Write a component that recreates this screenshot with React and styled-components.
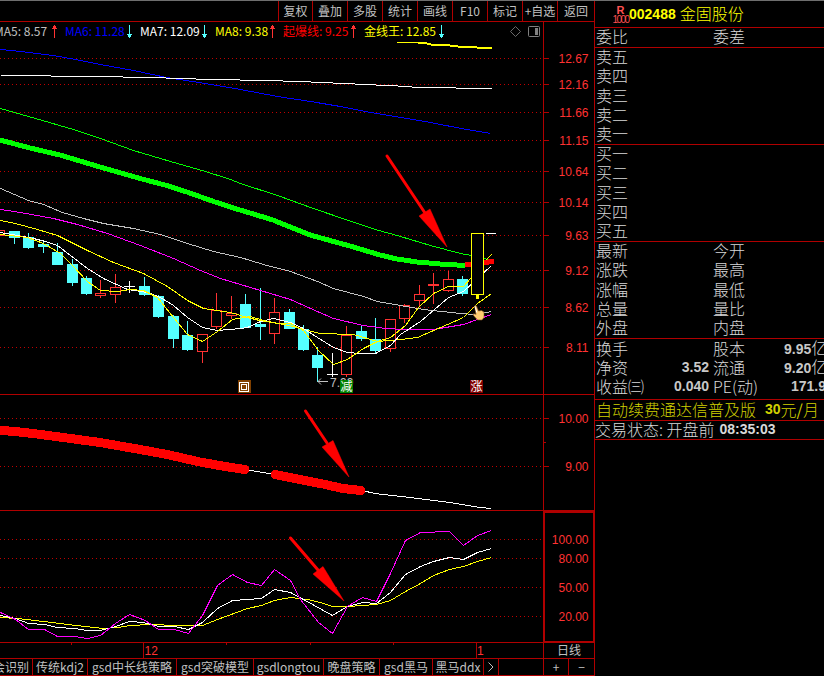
import React from "react";
import styled, { createGlobalStyle } from "styled-components";

const LINE = "#b00000";
const RED = "#ff3232";
const CYAN = "#54ffff";
const GREY = "#c0c0c0";

const tools = [
  { label: "复权", width: 34 },
  { label: "叠加", width: 35 },
  { label: "多股", width: 35 },
  { label: "统计", width: 35 },
  { label: "画线", width: 35 },
  { label: "F10", width: 35 },
  { label: "标记", width: 35 },
  { label: "+自选", width: 35 },
  { label: "返回", width: 37 },
];

const averages = [
  { label: "MA5: 8.57", color: GREY, width: 71, up: true },
  { label: "MA6: 11.28", color: "#0000ff", width: 75, up: false },
  { label: "MA7: 12.09", color: "#ffffff", width: 75, up: false },
  { label: "MA8: 9.38", color: "#ffff00", width: 68, up: true },
  { label: "起爆线: 9.25", color: "#ff0000", width: 81, up: true },
  { label: "金线王: 12.85", color: "#ffff00", width: 88, up: false },
];

const priceGrid = [
  [58, "12.67"],
  [84, "12.16"],
  [112, "11.66"],
  [140, "11.15"],
  [171, "10.64"],
  [202, "10.14"],
  [235, "9.63"],
  [270, "9.12"],
  [307, "8.62"],
  [347, "8.11"],
];

const trendGrid = [
  [418, "10.00"],
  [466, "9.00"],
];

const kdjGrid = [
  [539, "100.00"],
  [558, "80.00"],
  [587, "50.00"],
  [616, "20.00"],
];

// [left, body top, body bottom, wick top, wick bottom, kind]
const candles = [
  [-6, 230, 236, 230, 236, "up"],
  [9, 231, 238, 231, 244, "down"],
  [23, 237, 248, 233, 249, "down"],
  [38, 244, 247, 241, 253, "down"],
  [52, 252, 265, 243, 265, "down"],
  [67, 264, 283, 259, 286, "down"],
  [81, 278, 294, 276, 295, "down"],
  [95, 293, 296, 280, 298, "up"],
  [110, 287, 295, 274, 303, "up"],
  [124, 286, 287, 281, 293, "flat"],
  [139, 286, 295, 277, 296, "down"],
  [153, 296, 317, 295, 318, "down"],
  [168, 316, 339, 315, 348, "down"],
  [182, 335, 350, 321, 351, "down"],
  [197, 334, 352, 334, 363, "up"],
  [211, 310, 327, 293, 329, "up"],
  [226, 313, 316, 296, 319, "up"],
  [240, 304, 328, 294, 328, "down"],
  [255, 324, 327, 288, 340, "down"],
  [269, 312, 334, 298, 344, "up"],
  [284, 312, 329, 309, 329, "down"],
  [298, 329, 350, 325, 351, "down"],
  [312, 355, 368, 347, 382, "down"],
  [327, 374, 375, 353, 377, "flat"],
  [341, 335, 375, 326, 377, "up"],
  [356, 331, 339, 325, 341, "down"],
  [370, 339, 351, 318, 353, "down"],
  [385, 319, 349, 319, 352, "up"],
  [399, 305, 319, 304, 323, "up"],
  [414, 294, 301, 285, 307, "up"],
  [428, 284, 286, 273, 304, "up"],
  [443, 279, 291, 271, 292, "up"],
  [457, 279, 294, 276, 296, "down"],
];

const priceLines = [
  { color: "#0000ff", points: "0,49 20,51 53,55 75,59 100,64 133,70 166,77 205,83 240,89 277,96 310,101 340,106 370,112 400,117 430,122 466,129 490,133" },
  { color: "#ffffff", points: "0,75 50,75 51,76 122,76 123,77 165,77 166,78 195,78 196,79 239,79 240,80 268,80 296,81 325,82 340,83 368,84 383,85 411,86 412,87 455,87 456,88 491,88" },
  { color: "#00ff00", points: "0,108 35,118 73,129 100,138 133,150 170,161 205,171 230,179 240,183 280,196 310,207 348,220 375,229 400,236 430,245 460,253 471,255 488,259" },
  { color: "#c0c0c0", points: "0,188 28,200 43,204 62,212 83,218 103,223 133,228 160,234 187,243 213,251 240,257 263,264 290,271 317,281 333,288 363,296 377,301 400,305 423,309 460,313 475,314 491,311" },
  { color: "#ff00ff", points: "0,209 20,212 53,218 77,224 107,233 140,245 173,258 200,270 220,278 240,284 260,290 290,299 310,308 333,318 363,325 385,328 403,329 433,329 463,324 491,314" },
  { color: "#ffff00", points: "0,220 15,223 37,229 57,235 87,250 113,262 143,273 167,286 187,300 203,308 230,312 247,317 263,321 273,322 293,326 303,329 320,333 353,334 377,341 400,339 417,337 447,324 463,317 477,303 491,293" },
  { color: "#ffffff", points: "0,232 17,235 33,238 45,241 57,245 70,255 87,268 103,278 127,289 147,292 160,297 173,305 187,317 202,327 217,330 240,328 247,327 260,321 273,318 290,322 303,328 317,337 333,347 347,352 360,353 375,353 390,345 400,334 420,321 448,297 463,291 475,280 491,265" },
  { color: "#ffff00", points: "0,234 27,237 43,243 60,253 72,265 87,281 100,290 117,291 130,289 143,290 157,297 173,317 187,334 202,341 217,331 232,319 250,316 263,320 277,323 290,323 303,330 318,350 333,364 347,359 363,348 377,341 390,337 405,325 418,307 433,293 448,286 463,286 471,277 485,260 491,254" },
];

const kdjLines = [
  { color: "#ffff00", points: "0,617 17,618 43,621 67,624 103,628 117,627 130,625 150,624 177,625 202,625 217,619 247,608 261,605 274,600 290,597 307,599 320,602 332,606 347,606 376,604 390,600 405,591 420,583 433,575 449,569 463,566 477,561 491,557" },
  { color: "#ffffff", points: "0,615 15,618 28,623 44,624 57,627 74,628 87,630 100,630 115,626 129,621 143,622 158,626 174,626 188,629 202,622 217,608 232,600 261,598 274,589 290,592 303,599 332,615 347,606 362,602 376,603 390,592 405,574 420,566 433,561 449,557 463,559 477,552 491,548" },
  { color: "#ff00ff", points: "0,612 15,619 28,629 44,629 57,636 74,636 87,638 100,635 115,623 129,614 145,620 158,629 174,629 188,633 202,615 217,585 232,574 247,582 261,585 274,569 290,580 300,599 318,622 332,633 347,606 362,597 376,601 390,573 405,540 420,532 449,531 463,545 477,535 491,530" },
];

const tabs = [
  { label: "会识别", width: 33, clipped: true },
  { label: "传统kdj2", width: 55 },
  { label: "gsd中长线策略", width: 89 },
  { label: "gsd突破模型", width: 77 },
  { label: "gsdlongtou", width: 70 },
  { label: "晚盘策略", width: 56 },
  { label: "gsd黑马", width: 53 },
  { label: "黑马ddx", width: 51 },
];

const sells = ["卖五", "卖四", "卖三", "卖二", "卖一"];
const buys = ["买一", "买二", "买三", "买四", "买五"];
const quotes = [
  ["最新", "今开"],
  ["涨跌", "最高"],
  ["涨幅", "最低"],
  ["总量", "量比"],
  ["外盘", "内盘"],
];

const GlobalStyle = createGlobalStyle`
  * {
    box-sizing: border-box;
  }

  body {
    margin: 0;
    background: #000;
    overflow: hidden;
  }
`;

const Screen = styled.div`
  display: grid;
  grid-template-columns: 594px 230px;
  width: 824px;
  height: 676px;
  overflow: hidden;
  border-top: 1px solid #6e6e6e;
  background: #000;
  color: ${GREY};
  font: 12px/15px "Noto Sans CJK SC", "Liberation Sans", sans-serif;
  white-space: nowrap;
`;

const Main = styled.main`
  display: flex;
  flex-direction: column;
  min-width: 0;
`;

const Toolbar = styled.nav`
  display: flex;
  justify-content: flex-end;
  height: 21px;
  border-bottom: 1px solid ${LINE};
`;

const Tool = styled.div`
  display: flex;
  align-items: center;
  justify-content: center;
  width: ${({ $width }) => $width}px;
  padding-bottom: 2px;
  border-left: 1px solid ${LINE};
`;

const Legend = styled.div`
  display: flex;
  align-items: center;
  width: 544px;
  height: 19px;
  padding-right: 3px;
  border-right: 1px solid ${LINE};
  overflow: hidden;
`;

const Average = styled.div`
  display: flex;
  flex: none;
  align-items: center;
  justify-content: space-between;
  width: ${({ $width }) => $width}px;
  padding-right: 8px;
  color: ${({ $color }) => $color};

  span {
    padding-bottom: 2px;
  }

  &:first-child {
    margin-left: -6px;
  }
`;

const LegendTools = styled.div`
  display: flex;
  gap: 7px;
  margin-left: auto;
`;

const Pane = styled.svg`
  display: block;
  flex: none;
  width: 594px;
  height: ${({ $height }) => $height}px;
  border-bottom: 1px solid ${LINE};
  font: 12px "Liberation Sans", "Noto Sans CJK SC", sans-serif;
`;

const BottomRow = styled.div`
  display: flex;
  flex: none;
  height: ${({ $height }) => $height}px;
  border-bottom: 1px solid ${LINE};
`;

const Cell = styled.div`
  display: flex;
  align-items: center;
  justify-content: ${({ $clipped }) => ($clipped ? "flex-end" : "center")};
  width: ${({ $width }) => $width}px;
  padding: ${({ $clipped, $flush }) => `0 ${$clipped ? 3 : 0}px ${$flush ? 0 : 2}px 0`};
  border-right: ${({ $open }) => ($open ? "0" : `1px solid ${LINE}`)};
  overflow: hidden;
`;

const Side = styled.aside`
  display: flex;
  flex-direction: column;
  border-left: 1px solid ${LINE};
  overflow: hidden;
  color: #d8d8d8;
  font-size: 16px;
  font-weight: 300;
  line-height: 17px;
`;

const StockTitle = styled.header`
  display: flex;
  align-items: center;
  height: 27px;
  padding: 0 0 1px 17px;
  border-bottom: 1px solid ${LINE};
  color: #ffff00;
`;

const StockTag = styled.div`
  display: flex;
  flex: none;
  flex-direction: column;
  align-items: center;
  width: 17px;
  padding-top: 3px;
  color: #ff5050;
  font: 10px/10px "Liberation Sans", sans-serif;
  letter-spacing: -1.5px;

  b {
    font-size: 11px;
    letter-spacing: 0;
  }
`;

const Num = styled.b`
  font: bold 14px/16px "Liberation Sans", sans-serif;
`;

const StockName = styled.span`
  margin-left: 4px;
`;

const Block = styled.section`
  display: flex;
  flex: none;
  flex-direction: column;
  height: ${({ $height }) => $height}px;
  padding-bottom: ${({ $bottom }) => $bottom || 0}px;
  border-bottom: 1px solid ${LINE};
`;

const QuoteRow = styled.div`
  display: grid;
  flex: 1;
  grid-template-columns: 48px 65px 56px 60px;
  align-items: center;
  min-height: 0;
  padding: 0 0 2px 1px;

  & > :nth-child(2) {
    text-align: right;
  }

  & > :nth-child(3) {
    padding-left: 4px;
  }

  & > :nth-child(4) {
    padding-left: ${({ $indent }) => $indent || 19}px;
  }

  ${Num} {
    color: #c8c8c8;
  }
`;

const Notice = styled.div`
  display: flex;
  flex: none;
  align-items: center;
  height: ${({ $height }) => $height}px;
  padding: 0 0 2px ${({ $left }) => $left}px;
  border-bottom: 1px solid ${LINE};
  color: ${({ $color }) => $color};

  ${Num} {
    margin-left: ${({ $gap }) => $gap}px;
  }
`;

const TrendArrow = ({ up }) => (
  <svg width="5" height="13" viewBox="0 0 5 13" shapeRendering="crispEdges">
    <g fill={up ? RED : CYAN} transform={up ? undefined : "rotate(180 2.5 6.5)"}>
      <rect x="2" y="0" width="1" height="13" />
      <rect x="1" y="1" width="3" height="2" />
      <rect x="0" y="3" width="5" height="1" />
    </g>
  </svg>
);

const Grid = ({ rows, ticks = true }) => (
  <g>
    {rows.map(([y, label]) => (
      <g key={label}>
        <line x1="0" x2="542" y1={y + 0.5} y2={y + 0.5} stroke="#c00000" strokeDasharray="1 3" shapeRendering="crispEdges" />
        {ticks && <rect x="544" y={y} width="5" height="1" fill={LINE} />}
        <text x="588.5" y={y + 5} fill={RED} textAnchor="end">
          {label}
        </text>
      </g>
    ))}
  </g>
);

const Lines = ({ items }) => (
  <g fill="none" transform="translate(0.5 0.5)" shapeRendering="crispEdges">
    {items.map((item) => (
      <polyline key={item.points} points={item.points} stroke={item.color} />
    ))}
  </g>
);

const Candle = ({ data }) => {
  const [x, top, bottom, high, low, kind] = data;
  const color = { up: RED, down: CYAN, flat: "#ffffff" }[kind];
  return (
    <g shapeRendering="crispEdges">
      <rect x={x + 5} y={high} width="1" height={low - high} fill={color} />
      <rect x={x} y={top} width="11" height={bottom - top} fill={color} />
      {kind === "up" && bottom - top > 2 && (
        <rect x={x + 1} y={top + 1} width="9" height={bottom - top - 2} fill="#000" />
      )}
    </g>
  );
};

const Pointer = ({ from, neck, head }) => (
  <g stroke="#ff0000" fill="#ff0000">
    <line x1={from[0]} y1={from[1]} x2={neck[0]} y2={neck[1]} strokeWidth="3" strokeLinecap="round" />
    <polygon points={head} strokeWidth="0.5" />
  </g>
);

const Marker = ({ x, fill, label }) => (
  <g>
    <rect x={x} y="380" width="13" height="13" fill={fill} />
    <text x={x + 6.5} y="391" fill="#fff" fontSize="12" textAnchor="middle">
      {label}
    </text>
  </g>
);

const PricePane = () => (
  <Pane $height={354} viewBox="0 41 594 353">
    <Grid rows={priceGrid} />
    <rect x="543" y="41" width="1" height="353" fill={LINE} />
    {candles.map((data) => (
      <Candle key={data[0]} data={data} />
    ))}
    <Lines items={priceLines} />
    <g fill="none" shapeRendering="crispEdges">
      <polyline points="397,42.5 419,42.5" stroke="#ffff00" />
      <polyline points="418,43 427,43.5 433,45 450,45.5 462,47 477,47.5 492,48" stroke="#ffff00" strokeWidth="2" />
      <polyline
        points="0,140 30,148 60,155 100,167 142,179 165,185 187,192 215,202 240,210 273,220 310,235 350,246 380,255 397,259 417,262 440,264 465,265.5"
        stroke="#00ff00"
        strokeWidth="5"
      />
      <polyline points="467,264.5 476,264 485,262.5 492,261.5" stroke="#ff0000" strokeWidth="5" strokeLinecap="round" />
      <rect x="471.5" y="233.5" width="12" height="61" fill="#000" stroke="#ffff00" />
      <rect x="476" y="295" width="3" height="4" fill="#ffff00" />
      <rect x="486" y="233" width="10" height="1" fill="#fff" />
    </g>
    <g stroke={GREY} fill="none">
      <path d="M328 381.5H318M321 378.5L318 381.5L321 384.5" />
      <text x="330" y="387" fill={GREY} stroke="none">
        7.99
      </text>
    </g>
    <g shapeRendering="crispEdges">
      <rect x="238" y="380" width="13" height="13" fill="#804000" />
      <rect x="239.5" y="382.5" width="9" height="9" fill="none" stroke="#fff" />
      <rect x="241.5" y="384.5" width="5" height="5" fill="none" stroke="#fff" />
    </g>
    <Marker x={340} fill="#008000" label="减" />
    <Marker x={470} fill="#800000" label="涨" />
    <Pointer from={[387, 156]} neck={[425, 213]} head="419,216 430,209 447,247" />
    <g transform="translate(-1 -1)">
      <path
        d="M475.5 307q1-1 2 0l2 5 3-.5 2.5 1.5v5.5l-2 2.5h-4.5l-4-4.5q-1-2 .5-1.8l2 .8z"
        fill="#ffcc70"
        stroke="#7a4a20"
        strokeWidth="0.6"
      />
      <path d="M476 307.5l1.8 6" stroke="#fff" />
    </g>
  </Pane>
);

const TrendPane = () => (
  <Pane $height={116} viewBox="0 395 594 115">
    <Grid rows={trendGrid} />
    <rect x="543" y="395" width="1" height="115" fill={LINE} />
    <rect x="544" y="442" width="2" height="1" fill={LINE} />
    <g fill="none" shapeRendering="crispEdges">
      <polyline points="245,469.5 275,474.5" stroke="#fff" />
      <polyline points="362,490.5 375,493.5 410,497.5 450,502.5 480,507.5 491,508.5" stroke="#fff" />
      <g stroke="#ff0000" strokeWidth="9" strokeLinecap="round">
        <polyline points="-5,430 15,431.5 33,433.5 67,438 100,442.5 140,449.5 167,454.5 200,462 225,466.5 245,469.5" />
        <polyline points="275,474.5 300,479.5 323,484 343,488.5 361,490.5" />
      </g>
    </g>
    <Pointer from={[305.5, 411]} neck={[327, 443]} head="322,447 333,440.5 349,477" />
  </Pane>
);

const KdjPane = () => (
  <Pane $height={132} viewBox="0 511 594 131">
    <Grid rows={kdjGrid} ticks={false} />
    <Lines items={kdjLines} />
    <path d="M544 511V642M543 511.5H594M593.5 511V642M543 641.5H594" fill="none" stroke={LINE} strokeWidth="2" shapeRendering="crispEdges" />
    <Pointer from={[290.5, 538]} neck={[318, 570]} head="313,574 323,566.5 344,601" />
  </Pane>
);

const Timeline = () => (
  <svg width="543" height="15" viewBox="0 643 543 15" fontFamily="Liberation Sans, sans-serif" fontSize="12">
    <g fill={LINE}>
      {[71, 226, 310, 393].map((x) => (
        <rect key={x} x={x} y="643" width="1" height="2" />
      ))}
      <rect x="143" y="643" width="1" height="15" />
      <rect x="476" y="643" width="1" height="15" />
    </g>
    <g fill={RED}>
      <text x="144.5" y="655">12</text>
      <text x="477" y="655">1</text>
    </g>
  </svg>
);

const Detail = () => (
  <Side>
    <StockTitle>
      <StockTag>
        <b>R</b>
        <span>1000</span>
      </StockTag>
      <Num>002488</Num>
      <StockName>金固股份</StockName>
    </StockTitle>
    <Block $height={20}>
      <QuoteRow>
        <span>委比</span>
        <span />
        <span>委差</span>
      </QuoteRow>
    </Block>
    <Block $height={97}>
      {sells.map((label) => (
        <QuoteRow key={label}>{label}</QuoteRow>
      ))}
    </Block>
    <Block $height={97}>
      {buys.map((label) => (
        <QuoteRow key={label}>{label}</QuoteRow>
      ))}
    </Block>
    <Block $height={97}>
      {quotes.map(([left, right]) => (
        <QuoteRow key={left}>
          <span>{left}</span>
          <span />
          <span>{right}</span>
        </QuoteRow>
      ))}
    </Block>
    <Block $height={61} $bottom={2}>
      <QuoteRow>
        <span>换手</span>
        <span />
        <span>股本</span>
        <span>
          <Num>9.95</Num>亿
        </span>
      </QuoteRow>
      <QuoteRow>
        <span>净资</span>
        <Num>3.52</Num>
        <span>流通</span>
        <span>
          <Num>9.20</Num>亿
        </span>
      </QuoteRow>
      <QuoteRow $indent={26}>
        <span>收益㈢</span>
        <Num>0.040</Num>
        <span>PE(动)</span>
        <Num>171.98</Num>
      </QuoteRow>
    </Block>
    <Notice $height={21} $left={1} $gap={9} $color="#d0d000">
      自动续费通达信普及版<Num>30</Num>元<b>/</b>月
    </Notice>
    <Notice $height={19} $left={0} $gap={5} $color="#d8d8d8">
      交易状态: 开盘前<Num>08:35:03</Num>
    </Notice>
  </Side>
);

const App = () => {
  return (
    <Screen>
      <GlobalStyle />
      <Main>
        <Toolbar>
          {tools.map((tool) => (
            <Tool key={tool.label} $width={tool.width}>
              {tool.label}
            </Tool>
          ))}
        </Toolbar>
        <Legend>
          {averages.map((item) => (
            <Average key={item.label} $width={item.width} $color={item.color}>
              <span>{item.label}</span>
              <TrendArrow up={item.up} />
            </Average>
          ))}
          <LegendTools>
            <svg width="11" height="11" viewBox="0 0 11 11" fill="none" stroke="#6a6a6a">
              <path d="M5.5 .5L10.5 5.5L5.5 10.5L.5 5.5Z" />
            </svg>
            <svg width="12" height="11" viewBox="0 0 12 11">
              <rect x=".5" y=".5" width="11" height="10" rx="1" fill="none" stroke="#808080" />
              <rect x="7" y="2" width="3" height="7" fill="#808080" />
            </svg>
          </LegendTools>
        </Legend>
        <PricePane />
        <TrendPane />
        <KdjPane />
        <BottomRow $height={16}>
          <Cell $width={544} $flush>
            <Timeline />
          </Cell>
          <Cell $width={50} $open>
            日线
          </Cell>
        </BottomRow>
        <BottomRow $height={17}>
          {tabs.map((tab) => (
            <Cell key={tab.label} $width={tab.width} $clipped={tab.clipped}>
              {tab.label}
            </Cell>
          ))}
          <Cell $width={15} $flush>
            <svg width="6" height="10" viewBox="0 0 6 10" fill="none" stroke={GREY}>
              <path d="M.5 .5L5 5L.5 9.5" />
            </svg>
          </Cell>
          <Cell $width={45} />
          <Cell $width={25}>+</Cell>
          <Cell $width={25} $open>
            −
          </Cell>
        </BottomRow>
      </Main>
      <Detail />
    </Screen>
  );
};

export default App;
